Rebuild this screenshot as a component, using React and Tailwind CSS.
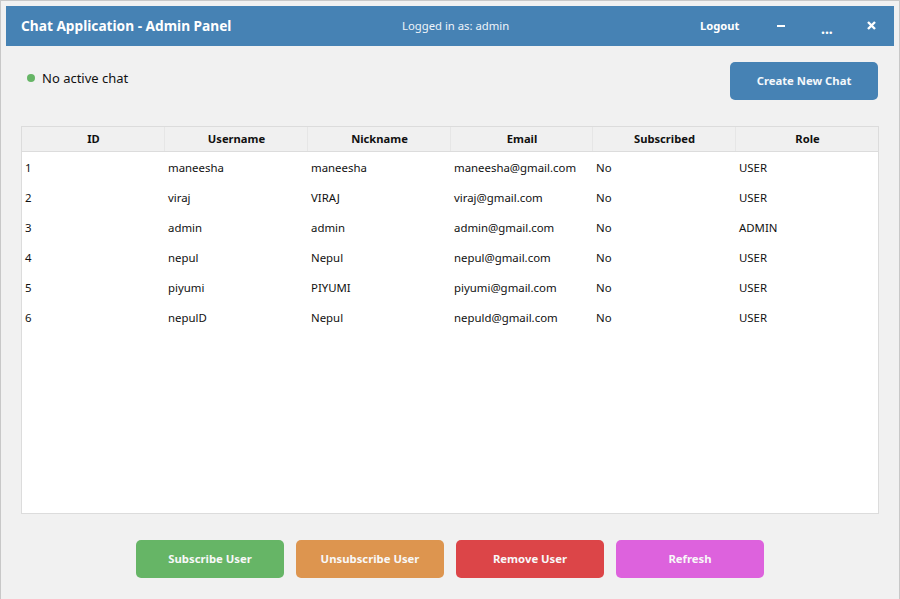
const COLUMNS = ['ID', 'Username', 'Nickname', 'Email', 'Subscribed', 'Role']

const USERS = [
  ['1', 'maneesha', 'maneesha', 'maneesha@gmail.com', 'No', 'USER'],
  ['2', 'viraj', 'VIRAJ', 'viraj@gmail.com', 'No', 'USER'],
  ['3', 'admin', 'admin', 'admin@gmail.com', 'No', 'ADMIN'],
  ['4', 'nepul', 'Nepul', 'nepul@gmail.com', 'No', 'USER'],
  ['5', 'piyumi', 'PIYUMI', 'piyumi@gmail.com', 'No', 'USER'],
  ['6', 'nepulD', 'Nepul', 'nepuld@gmail.com', 'No', 'USER'],
]

const ACTIONS = [
  { label: 'Subscribe User', color: 'bg-[#66b566]' },
  { label: 'Unsubscribe User', color: 'bg-[#dd954f]' },
  { label: 'Remove User', color: 'bg-[#dc4548]' },
  { label: 'Refresh', color: 'bg-[#dd62dd]' },
]

export default function App() {
  return (
    <div className="h-[599px] w-[900px] overflow-hidden border-x border-t border-[#c8c8c8] bg-[#f1f1f1] px-[5px] pt-[5px] font-['Noto_Sans',sans-serif] text-[#111]">
      {/* Title bar */}
      <div className="flex h-[40px] items-center bg-[#4682b4] pl-[15px] text-white">
        <div className="w-[381px] text-[13.7px] font-bold">Chat Application - Admin Panel</div>
        <div className="w-[298px] text-[11.3px] text-[#eef4fa]">Logged in as: admin</div>
        <div className="w-[77px] text-[11.2px] font-bold">Logout</div>
        <div className="mb-[1px] h-[2px] w-[8px] bg-white" />
        <div className="w-[36px] pl-[36px] pt-[5px] text-[14px] font-bold">...</div>
        <div className="mb-[1px] ml-[46px] flex">
          <svg width="9" height="9" viewBox="0 0 9 9">
            <path d="M1 1 8 8M8 1 1 8" stroke="#fff" strokeWidth="2.4" />
          </svg>
        </div>
      </div>

      {/* Status + create */}
      <div className="flex h-[80px] items-start justify-between pl-[21px] pr-[16px]">
        <div className="mt-[22px] flex items-center gap-[7px] text-[13px] leading-[20px]">
          <span className="h-[8px] w-[8px] rounded-full bg-[#66b566]" />
          No active chat
        </div>
        <button className="mt-[16px] h-[38px] w-[148px] rounded-[5px] bg-[#4682b4] pt-[1px] text-[11.3px] font-bold text-[#f4f8fb]">
          Create New Chat
        </button>
      </div>

      {/* Users table */}
      <div className="mx-[15px] h-[388px] border border-[#dcdcdc] bg-white">
        <div className="grid h-[25px] grid-cols-[143px_143px_143px_142px_143px_1fr] border-b border-[#dcdcdc] bg-[#f0f0f0]">
          {COLUMNS.map((col) => (
            <div key={col} className="flex items-center justify-center border-r border-[#e6e6e6] pl-[1px] pt-[1px] text-[11.2px] font-bold last:border-r-0">
              {col}
            </div>
          ))}
        </div>
        {USERS.map((user) => (
          <div key={user[0]} className="grid h-[30px] grid-cols-[143px_143px_143px_142px_143px_1fr] items-center pt-[1px]">
            {user.map((value, i) => (
              <div key={i} className="truncate pl-[3px] text-[11.4px]">
                {value}
              </div>
            ))}
          </div>
        ))}
      </div>

      {/* Actions */}
      <div className="mt-[26px] flex justify-center gap-[12px]">
        {ACTIONS.map((action) => (
          <button key={action.label} className={`h-[38px] w-[148px] rounded-[5px] pt-[1px] text-[11.3px] font-bold text-[#f8f8f8] ${action.color}`}>
            {action.label}
          </button>
        ))}
      </div>
    </div>
  )
}
